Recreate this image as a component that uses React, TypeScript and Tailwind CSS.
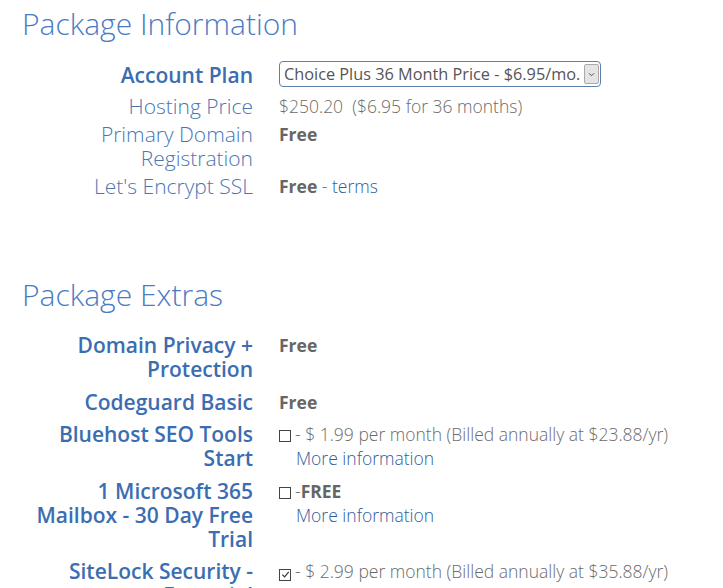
import React from "react";

const font = { fontFamily: '"Open Sans", "Liberation Sans", sans-serif' };

const Check = ({ checked = false }: { checked?: boolean }) => (
  <span className="inline-flex h-[12px] w-[12px] items-center justify-center border border-[#444] bg-white mr-[4px] translate-y-[1px]">
    {checked && (
      <svg viewBox="0 0 10 10" className="h-[9px] w-[9px]">
        <path d="M1.5 5.2 L4 7.6 L8.6 2.2" fill="none" stroke="#333" strokeWidth="1.3" />
      </svg>
    )}
  </span>
);

const Row = ({
  label,
  bold = false,
  className = "",
  children,
}: {
  label: React.ReactNode;
  bold?: boolean;
  className?: string;
  children: React.ReactNode;
}) => (
  <div className={"grid grid-cols-[231px_1fr] gap-x-[26px] " + className}>
    <div
      className={
        "text-right text-[21px] leading-[24px] " +
        (bold ? "font-semibold text-[#3b6db1]" : "font-light text-[#4a77b4]")
      }
    >
      {label}
    </div>
    <div className="text-[17.5px] leading-[24px] font-light text-[#6b6b6b]">{children}</div>
  </div>
);

export default function App() {
  return (
    <div className="min-h-screen bg-white pl-[22px] pt-[4px]" style={font}>
      <h2 className="text-[30px] leading-[40px] font-light text-[#4a7cc4]">Package Information</h2>

      <div className="mt-[19px] flex flex-col gap-[4px]">
        <Row label="Account Plan" bold className="mb-[3px]">
          <div className="flex h-[26px] w-[322px] items-center rounded-[4px] border border-[#5b7fae] pl-[4px] pr-[1px] -mt-[2px]">
            <span className="flex-1 text-[16.3px] font-normal text-[#555] whitespace-nowrap">
              Choice Plus 36 Month Price - $6.95/mo.
            </span>
            <span className="flex h-[20px] w-[15px] items-center justify-center rounded-[2px] border border-[#aaa] bg-[#e4e4e4]">
              <svg viewBox="0 0 8 6" className="h-[5px] w-[7px]">
                <path d="M1 1.5 L4 4.5 L7 1.5" fill="none" stroke="#444" strokeWidth="1.1" />
              </svg>
            </span>
          </div>
        </Row>
        <Row label="Hosting Price">
          <span>$250.20&nbsp; ($6.95 for 36 months)</span>
        </Row>
        <Row label={<>Primary Domain<br />Registration</>}>
          <span className="font-bold text-[#666]">Free</span>
        </Row>
        <Row label="Let's Encrypt SSL">
          <span className="font-bold text-[#666]">Free</span>
          <span> - </span>
          <a className="text-[#2f5c9c]">terms</a>
        </Row>
      </div>

      <h2 className="mt-[77px] text-[30px] leading-[40px] font-light text-[#4a7cc4]">Package Extras</h2>

      <div className="mt-[18px] flex flex-col gap-[8.5px]">
        <Row label={<>Domain Privacy +<br />Protection</>} bold>
          <span className="font-bold text-[#666]">Free</span>
        </Row>
        <Row label="Codeguard Basic" bold>
          <span className="font-bold text-[#666]">Free</span>
        </Row>
        <Row label={<>Bluehost SEO Tools<br />Start</>} bold>
          <div className="whitespace-nowrap">
            <Check />- $ 1.99 per month (Billed annually at $23.88/yr)
          </div>
          <div className="pl-[17px] text-[#2f5c9c]">More information</div>
        </Row>
        <Row label={<>1 Microsoft 365<br />Mailbox - 30 Day Free<br />Trial</>} bold>
          <div className="whitespace-nowrap">
            <Check />-<span className="font-bold text-[#666]">FREE</span>
          </div>
          <div className="pl-[17px] text-[#2f5c9c]">More information</div>
        </Row>
        <Row label={<>SiteLock Security -<br />Essential</>} bold>
          <div className="whitespace-nowrap">
            <Check checked />- $ 2.99 per month (Billed annually at $35.88/yr)
          </div>
          <div className="pl-[17px] text-[#2f5c9c]">More information</div>
        </Row>
      </div>
    </div>
  );
}
